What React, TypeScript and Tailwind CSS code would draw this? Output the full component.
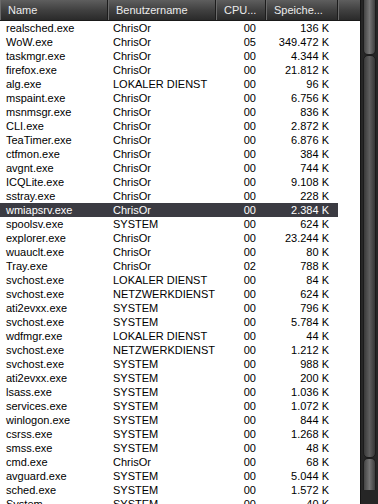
type Proc = [string, string, string, string];

const PROCS: Proc[] = [
  ['realsched.exe', 'ChrisOr', '00', '136 K'],
  ['WoW.exe', 'ChrisOr', '05', '349.472 K'],
  ['taskmgr.exe', 'ChrisOr', '00', '4.344 K'],
  ['firefox.exe', 'ChrisOr', '00', '21.812 K'],
  ['alg.exe', 'LOKALER DIENST', '00', '96 K'],
  ['mspaint.exe', 'ChrisOr', '00', '6.756 K'],
  ['msnmsgr.exe', 'ChrisOr', '00', '836 K'],
  ['CLI.exe', 'ChrisOr', '00', '2.872 K'],
  ['TeaTimer.exe', 'ChrisOr', '00', '6.876 K'],
  ['ctfmon.exe', 'ChrisOr', '00', '384 K'],
  ['avgnt.exe', 'ChrisOr', '00', '744 K'],
  ['ICQLite.exe', 'ChrisOr', '00', '9.108 K'],
  ['sstray.exe', 'ChrisOr', '00', '228 K'],
  ['wmiapsrv.exe', 'ChrisOr', '00', '2.384 K'],
  ['spoolsv.exe', 'SYSTEM', '00', '624 K'],
  ['explorer.exe', 'ChrisOr', '00', '23.244 K'],
  ['wuauclt.exe', 'ChrisOr', '00', '80 K'],
  ['Tray.exe', 'ChrisOr', '02', '788 K'],
  ['svchost.exe', 'LOKALER DIENST', '00', '84 K'],
  ['svchost.exe', 'NETZWERKDIENST', '00', '624 K'],
  ['ati2evxx.exe', 'SYSTEM', '00', '796 K'],
  ['svchost.exe', 'SYSTEM', '00', '5.784 K'],
  ['wdfmgr.exe', 'LOKALER DIENST', '00', '44 K'],
  ['svchost.exe', 'NETZWERKDIENST', '00', '1.212 K'],
  ['svchost.exe', 'SYSTEM', '00', '988 K'],
  ['ati2evxx.exe', 'SYSTEM', '00', '200 K'],
  ['lsass.exe', 'SYSTEM', '00', '1.036 K'],
  ['services.exe', 'SYSTEM', '00', '1.072 K'],
  ['winlogon.exe', 'SYSTEM', '00', '844 K'],
  ['csrss.exe', 'SYSTEM', '00', '1.268 K'],
  ['smss.exe', 'SYSTEM', '00', '48 K'],
  ['cmd.exe', 'ChrisOr', '00', '68 K'],
  ['avguard.exe', 'SYSTEM', '00', '5.044 K'],
  ['sched.exe', 'SYSTEM', '00', '1.572 K'],
  ['System', 'SYSTEM', '00', '40 K'],
];

const SELECTED = 13;

function HeaderCell({ label, width }: { label: string; width: string }) {
  return (
    <div
      className={`${width} h-full flex items-center pl-[7px] border-l border-l-[#6a6a6a] border-r border-r-[#1c1c1c] text-[#ececec] whitespace-nowrap overflow-hidden`}
    >
      {label}
    </div>
  );
}

export default function App() {
  return (
    <div
      className="w-[378px] h-[504px] overflow-hidden flex bg-white text-[11px] leading-[14px]"
      style={{ fontFamily: '"Liberation Sans", Arial, sans-serif' }}
    >
      {/* List */}
      <div className="w-[360px] flex flex-col">
        <div className="h-[21px] shrink-0 flex bg-gradient-to-b from-[#5e5e5e] via-[#414141] to-[#2a2a2a] border-b border-b-[#1a1a1a]">
          <HeaderCell label="Name" width="w-[108px]" />
          <HeaderCell label="Benutzername" width="w-[108px]" />
          <HeaderCell label="CPU..." width="w-[50px]" />
          <HeaderCell label="Speiche..." width="w-[72px]" />
          <div className="flex-1 border-l border-l-[#6a6a6a]" />
        </div>

        <div className="flex flex-col">
          {PROCS.map(([name, user, cpu, mem], i) => (
            <div
              key={i}
              className={`h-[14px] shrink-0 flex w-[338px] whitespace-nowrap ${
                i === SELECTED ? 'bg-[#3b3b42] text-white' : 'text-black'
              }`}
            >
              <div className="w-[108px] pl-[6px]">{name}</div>
              <div className="w-[108px] pl-[5px]">{user}</div>
              <div className="w-[50px] pr-[10px] text-right">{cpu}</div>
              <div className="w-[72px] pr-[9px] text-right">{mem}</div>
            </div>
          ))}
        </div>
      </div>

      {/* Scrollbar */}
      <div className="w-[18px] h-full flex flex-col bg-[#262626] border-l border-l-[#151515] px-[2px]">
        <div className="h-[55px] shrink-0 rounded-b-[5px] bg-gradient-to-r from-[#454545] via-[#767676] to-[#3e3e3e] border-x border-b border-[#1e1e1e]" />
        <div className="flex-1 rounded-[5px] bg-gradient-to-r from-[#3a3a3a] via-[#5e5e5e] to-[#363636] border border-[#1c1c1c]" />
        <div className="h-[32px] shrink-0 rounded-t-[5px] bg-gradient-to-r from-[#454545] via-[#747474] to-[#3e3e3e] border-x border-t border-[#1e1e1e]" />
        <div className="h-[14px] shrink-0" />
      </div>
    </div>
  );
}
